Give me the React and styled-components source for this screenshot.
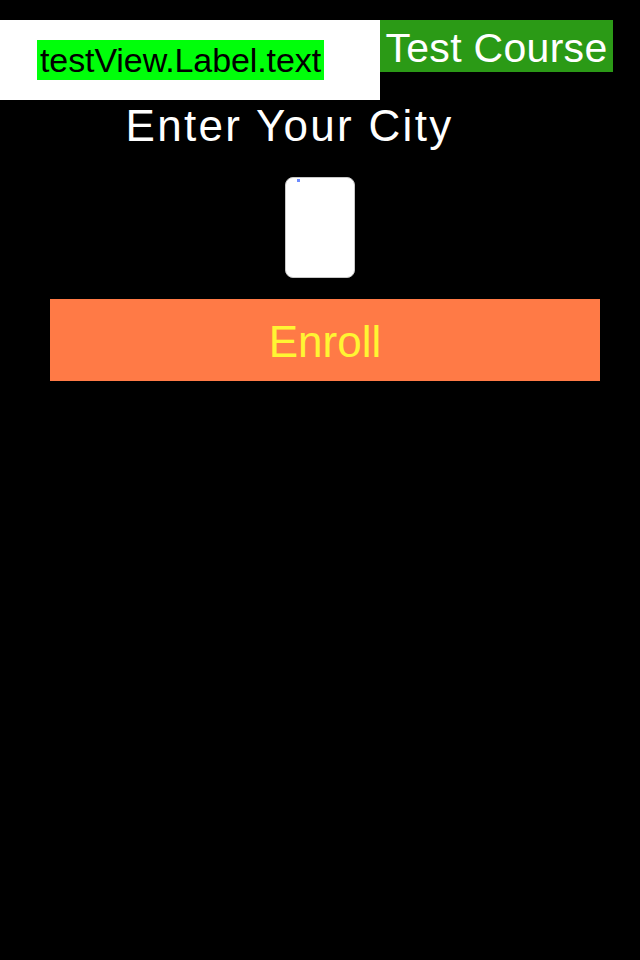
import styled, { createGlobalStyle } from 'styled-components';

const GlobalStyle = createGlobalStyle`
  html, body {
    margin: 0;
    padding: 0;
    background: #000;
    font-family: "Liberation Sans", Arial, sans-serif;
  }
`;

const Screen = styled.div`
  width: 640px;
  height: 960px;
  background: #000;
  padding-top: 20px;
  box-sizing: border-box;
`;

const TopRow = styled.div`
  display: flex;
  align-items: flex-start;
`;

const LabelHolder = styled.div`
  width: 380px;
  height: 80px;
  background: #fff;
  display: flex;
  align-items: center;
  padding-left: 37px;
  box-sizing: border-box;
`;

const DebugLabel = styled.div`
  width: 287px;
  height: 40px;
  line-height: 40px;
  background: #00ff0a;
  color: #000;
  font-size: 34px;
  letter-spacing: -0.1px;
  text-align: center;
  white-space: nowrap;
`;

const CourseTag = styled.div`
  width: 233px;
  height: 52px;
  line-height: 52px;
  padding-top: 2px;
  box-sizing: border-box;
  background: #2b9a16;
  color: #fff;
  font-size: 41px;
  letter-spacing: 0.3px;
  text-align: center;
  white-space: nowrap;
`;

const Title = styled.h1`
  margin: 0;
  padding-top: 2px;
  width: 579px;
  font-size: 44px;
  font-weight: 400;
  line-height: 48px;
  letter-spacing: 2.3px;
  color: #fff;
  text-align: center;
`;

const CityField = styled.div`
  position: relative;
  width: 70px;
  height: 101px;
  margin: 27px auto 0;
  background: #fff;
  border: 1px solid #c8c8c8;
  border-radius: 8px;
  box-sizing: border-box;
`;

const Caret = styled.span`
  position: absolute;
  left: 11px;
  top: 1px;
  width: 3px;
  height: 3px;
  background: #6d8cff;
`;

const EnrollButton = styled.button`
  display: block;
  width: 550px;
  height: 82px;
  margin: 21px 0 0 50px;
  padding: 3px 0 0;
  border: none;
  background: #ff7a46;
  color: #fff533;
  font-family: "Liberation Sans", Arial, sans-serif;
  font-size: 44px;
  line-height: 79px;
  text-align: center;
`;

export default function App() {
  return (
    <>
      <GlobalStyle />
      <Screen>
        <TopRow>
          <LabelHolder>
            <DebugLabel>testView.Label.text</DebugLabel>
          </LabelHolder>
          <CourseTag>Test Course</CourseTag>
        </TopRow>
        <Title>Enter Your City</Title>
        <CityField>
          <Caret />
        </CityField>
        <EnrollButton>Enroll</EnrollButton>
      </Screen>
    </>
  );
}
